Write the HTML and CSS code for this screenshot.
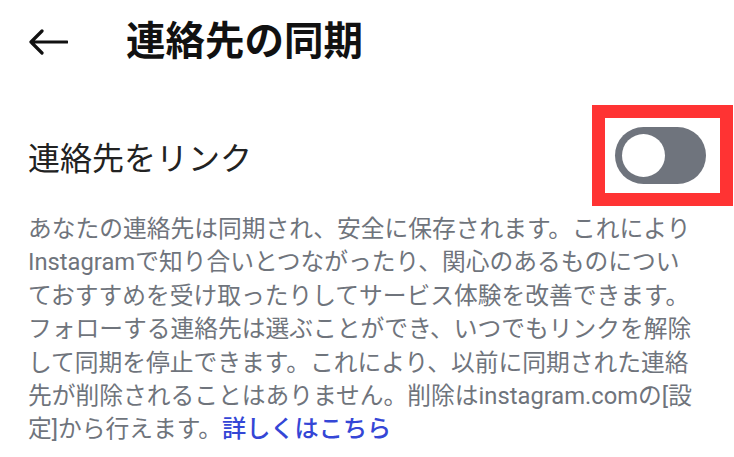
FILE: index.html
```html
<!DOCTYPE html>
<html lang="ja">
<head>
  <meta charset="UTF-8">
  <title>連絡先の同期</title>
  <meta name="viewport" content="width=device-width, initial-scale=1.0">
  <link rel="stylesheet" href="styles.css">
</head>
<body>

<div class="header">
  <svg class="back" width="40" height="26" viewBox="0 0 40 26">
    <path d="M39 13H3M14 2L3 13l11 11" fill="none" stroke="#111" stroke-width="3.2" stroke-linecap="round" stroke-linejoin="round"/>
  </svg>
  <h1>連絡先の同期</h1>
</div>

<div class="setting-row">
  <span class="setting-label">連絡先をリンク</span>
  <div class="highlight">
    <div class="toggle"><div class="knob"></div></div>
  </div>
</div>

<p class="desc">あなたの連絡先は同期され、安全に保存されます。これにより<br>Instagramで知り合いとつながったり、関心のあるものについ<br>ておすすめを受け取ったりしてサービス体験を改善できます。<br>フォローする連絡先は選ぶことができ、いつでもリンクを解除<br>して同期を停止できます。これにより、以前に同期された連絡<br>先が削除されることはありません。削除はinstagram.comの[設<br>定]から行えます。<a class="more" href="#">詳しくはこちら</a></p>

</body>
</html>
```

FILE: styles.css
```css
body { margin: 0; background: #fff; font-family: Roboto, "Noto Sans CJK JP", sans-serif; color: #1c1c1c; }
.header { display: flex; align-items: center; padding: 18px 0 0 28px; height: 48px; }
.back { display: block; margin-right: 58px; }
h1 { margin: 0; font-size: 39.5px; font-weight: bold; color: #111; line-height: 48px; }
.setting-row { display: flex; align-items: center; justify-content: space-between; padding-left: 28px; margin-top: 39px; }
.setting-label { font-size: 32px; color: #222; }
.highlight { border: 13px solid #ff3333; display: flex; align-items: center; padding-left: 10px; box-sizing: border-box; width: 141px; height: 101px; margin-right: 1px; }
.toggle { width: 91px; height: 57px; border-radius: 29px; background: #6f747d; display: flex; align-items: center; padding-left: 7px; box-sizing: border-box; }
.knob { width: 43px; height: 43px; border-radius: 50%; background: #fff; }
.desc { margin: 7px 0 0 28px; font-size: 23.75px; line-height: 33.4px; color: #6f747c; }
.more { color: #3446d6; font-weight: 500; text-decoration: none; font-size: 24.2px; }
```
